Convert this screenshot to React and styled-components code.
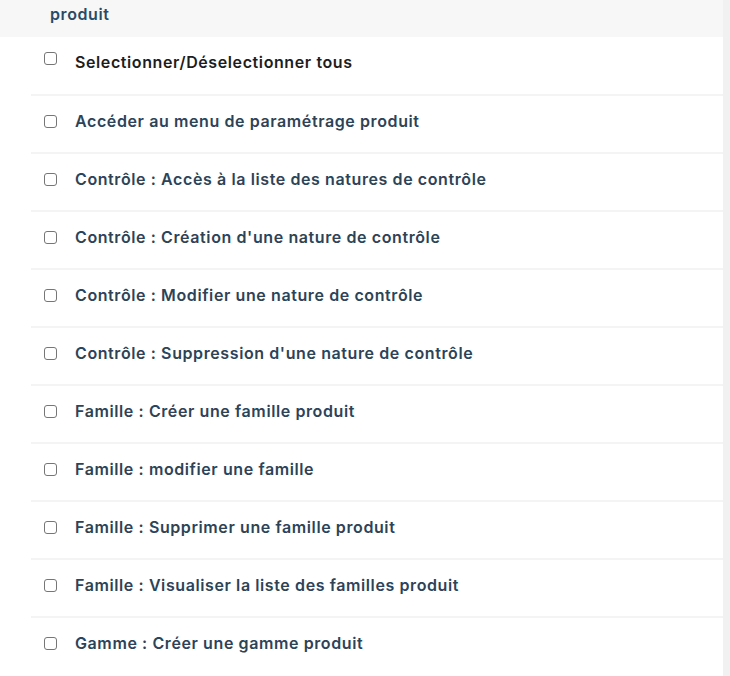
import React from 'react';
import styled, { createGlobalStyle } from 'styled-components';

const GlobalStyle = createGlobalStyle`
  html, body {
    margin: 0;
    padding: 0;
    background: #ffffff;
    font-family: "Inter", "Noto Sans", "Liberation Sans", sans-serif;
    overflow: hidden;
  }
`;

const Page = styled.div`
  display: flex;
  width: 730px;
  height: 676px;
  overflow: hidden;
`;

const Panel = styled.div`
  flex: 1;
  display: flex;
  flex-direction: column;
`;

const Scrollbar = styled.div`
  width: 7px;
  background: #f1f1f1;
`;

const Header = styled.div`
  height: 37px;
  background: #f7f7f7;
  display: flex;
  align-items: center;
  padding-left: 50px;
  padding-bottom: 9px;
  box-sizing: border-box;
  font-size: 16px;
  font-weight: 600;
  letter-spacing: 0.6px;
  color: #2b4a65;
`;

const List = styled.ul`
  list-style: none;
  margin: 0;
  padding: 0 0 0 31px;
`;

const Row = styled.li`
  height: ${p => (p.$first ? '57px' : '58px')};
  display: flex;
  align-items: center;
  gap: 18px;
  padding-left: 13px;
  padding-bottom: 7px;
  box-sizing: border-box;
  border-top: ${p => (p.$first ? 'none' : '2px solid #f4f4f4')};
`;

const Box = styled.span`
  width: 13px;
  height: 13px;
  border: 1px solid #767676;
  border-radius: 3px;
  box-sizing: border-box;
  flex-shrink: 0;
  transform: translateY(${p => (p.$first ? '-4px' : '1px')});
`;

const Label = styled.span`
  font-size: 16px;
  font-weight: 600;
  color: ${p => (p.$first ? '#1d1d1d' : '#2d4357')};
  letter-spacing: 0.6px;
`;

const items = [
  'Accéder au menu de paramétrage produit',
  'Contrôle : Accès à la liste des natures de contrôle',
  "Contrôle : Création d'une nature de contrôle",
  'Contrôle : Modifier une nature de contrôle',
  "Contrôle : Suppression d'une nature de contrôle",
  'Famille : Créer une famille produit',
  'Famille : modifier une famille',
  'Famille : Supprimer une famille produit',
  'Famille : Visualiser la liste des familles produit',
  'Gamme : Créer une gamme produit',
];

export default function App() {
  return (
    <Page>
      <GlobalStyle />
      <Panel>
        <Header>produit</Header>
        <List>
          <Row $first>
            <Box $first />
            <Label $first>Selectionner/Déselectionner tous</Label>
          </Row>
          {items.map(text => (
            <Row key={text}>
              <Box />
              <Label>{text}</Label>
            </Row>
          ))}
        </List>
      </Panel>
      <Scrollbar />
    </Page>
  );
}
